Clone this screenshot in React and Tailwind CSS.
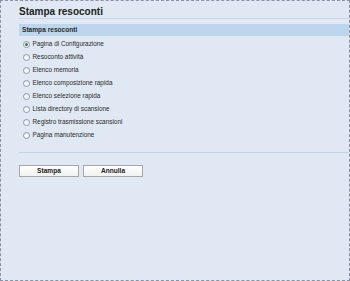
import React from "react";

const items = [
  "Pagina di Configurazione",
  "Resoconto attività",
  "Elenco memoria",
  "Elenco composizione rapida",
  "Elenco selezione rapida",
  "Lista directory di scansione",
  "Registro trasmissione scansioni",
  "Pagina manutenzione",
];

const Radio = ({ checked }) => (
  <span className="w-[7px] h-[7px] rounded-full border border-[#8d9aaa] bg-gradient-to-b from-[#e9edf2] to-white flex items-center justify-center shrink-0">
    {checked && <span className="w-[3px] h-[3px] rounded-full bg-[#3f7a3c]" />}
  </span>
);

const App = () => {
  return (
    <div
      className="w-[350px] h-[281px] border border-dashed border-[#8a93a3] bg-[#dfe8f3] text-[#2a2a2a] overflow-hidden"
      style={{ fontFamily: '"Liberation Sans", Arial, sans-serif' }}
    >
      <div className="pl-[18px]">
        <div className="h-[18px] pt-[6px] border-b border-[#c6d6e7]">
          <h1 className="text-[10px] leading-[10px] font-bold text-[#222]">
            Stampa resoconti
          </h1>
        </div>

        <div className="mt-[5px] h-[12px] bg-[#bdd6ee] pl-[3px] flex items-center">
          <span className="text-[6.6px] font-bold leading-none">Stampa resoconti</span>
        </div>

        <div className="mt-[2px]">
          {items.map((label, i) => (
            <label key={label} className="h-[13px] pl-[3.5px] flex items-center gap-[3px]">
              <Radio checked={i === 0} />
              <span className="text-[6.4px] leading-none">{label}</span>
            </label>
          ))}
        </div>

        <div className="mt-[10px] border-t border-[#c3d3e3]" />

        <div className="mt-[12px] flex gap-[4px]">
          <button className="w-[60px] h-[12px] border border-[#a3a7ad] bg-gradient-to-b from-white to-[#f1f1f1] text-[6.6px] font-bold leading-none text-[#222]">
            Stampa
          </button>
          <button className="w-[60px] h-[12px] border border-[#a3a7ad] bg-gradient-to-b from-white to-[#f1f1f1] text-[6.6px] font-bold leading-none text-[#222]">
            Annulla
          </button>
        </div>
      </div>
    </div>
  );
};

export default App;
